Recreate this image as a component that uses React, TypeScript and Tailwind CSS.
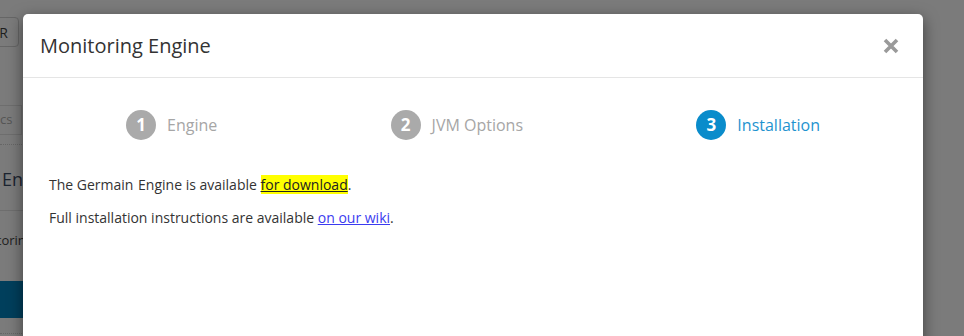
import React from "react";

const font = { fontFamily: '"Open Sans", "Noto Sans", Arial, sans-serif' };

function Step({ n, label, active }: { n: number; label: string; active?: boolean }) {
  return (
    <div className="flex items-center gap-[11px]">
      <div
        className={
          "flex h-[30px] w-[30px] items-center justify-center rounded-full text-[17px] font-bold text-white " +
          (active ? "bg-[#0a8ccb]" : "bg-[#aaaaaa]")
        }
      >
        {n}
      </div>
      <span className={"text-[16px] " + (active ? "text-[#1e93cf]" : "text-[#a6a6a6]")}>{label}</span>
    </div>
  );
}

export default function App() {
  return (
    <div className="relative h-[336px] w-[964px] overflow-hidden bg-[#7b7b7b]" style={font}>
      {/* dimmed background page */}
      <div className="flex w-[40px] flex-col">
        <div className="mt-[17px] ml-[-20px] flex h-[30px] w-[39px] items-center justify-end rounded-[4px] border border-[#666] pr-[10px] text-[14px] text-[#1e1e1e]">
          R
        </div>
        <div className="mt-[58px] ml-[-20px] flex h-[30px] w-[42px] items-center border border-[#6e6e6e] pl-[19px] text-[13px] text-[#555]">
          cs
        </div>
        <div className="mt-[9px] border-t border-dotted border-[#666]" />
        <div className="mt-[20px] ml-[2px] whitespace-nowrap text-[18px] leading-[28px] text-[#1c2430]">Engine</div>
        <div className="mt-[17px] border-t border-[#6e6e6e]" />
        <div className="mt-[20px] ml-[-34px] whitespace-nowrap text-[13px] leading-[18px] text-[#1e1e1e]">Monitoring</div>
        <div className="mt-[32px] h-[37px] bg-[#003f5c]" />
        <div className="mt-[15px] border-t border-dotted border-[#666]" />
      </div>

      {/* modal */}
      <div className="absolute left-[23px] top-[14px] h-[340px] w-[900px] rounded-[5px] bg-white shadow-[0_5px_15px_rgba(0,0,0,0.5)]">
        <div className="flex h-[64px] items-center justify-between border-b border-[#e5e5e5] pl-[17px] pr-[24px]">
          <h4 className="text-[20px] text-[#333]">Monitoring Engine</h4>
          <svg width="16" height="16" viewBox="0 0 16 16">
            <path d="M2 2 L14 14 M14 2 L2 14" stroke="#9a9a9a" strokeWidth="3.6" strokeLinecap="butt" />
          </svg>
        </div>
        <div className="px-[26px]">
          <div className="mt-[32px] flex justify-between px-[77px]">
            <Step n={1} label="Engine" />
            <Step n={2} label="JVM Options" />
            <Step n={3} label="Installation" active />
          </div>
          <p className="mt-[35px] text-[14px] leading-[19px] text-[#333]">
            The Germain<span className="ml-[1px]"> </span>Engine is available{" "}
            <a className="bg-[#ffff00] text-[#222] underline decoration-[#222]">for download</a>.
          </p>
          <p className="mt-[14px] text-[14px] leading-[19px] text-[#333]">
            Full installation instructions are available{" "}
            <a className="text-[#3b3bf0] underline">on our wiki</a>.
          </p>
        </div>
      </div>
    </div>
  );
}
